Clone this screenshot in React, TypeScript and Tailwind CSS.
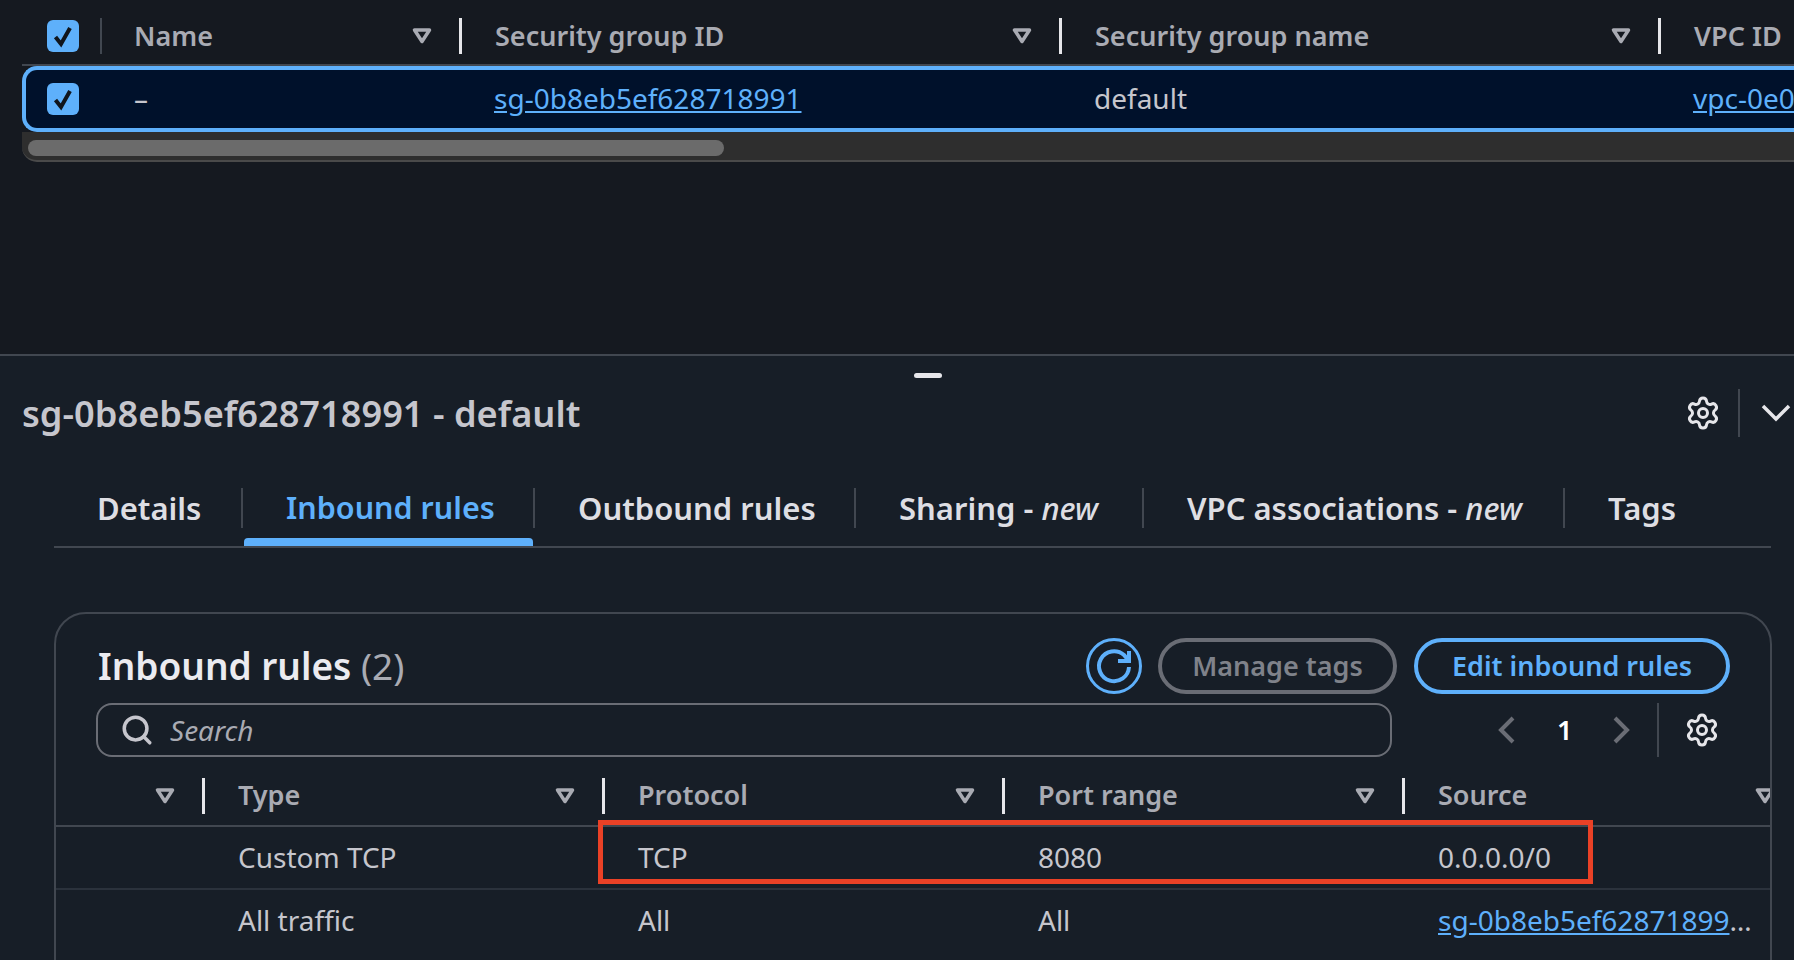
import { Search, Settings } from "lucide-react";

function FilterIcon() {
  return (
    <svg width="20" height="16" viewBox="0 0 20 16" className="shrink-0">
      <path d="M2.5 2 H17.5 L10 13.5 Z" fill="none" stroke="#a9abb3" strokeWidth="3.5" strokeLinejoin="round" />
    </svg>
  );
}

function RefreshIcon() {
  return (
    <svg width="56" height="56" viewBox="0 0 56 56" className="shrink-0">
      <circle cx="28" cy="28" r="26.5" fill="none" stroke="#5eb0fb" strokeWidth="3" />
      <path d="M43 29 A15 15 0 1 1 38 17 L43 23" fill="none" stroke="#5eb0fb" strokeWidth="4" />
      <path d="M43 13 V23 H32" fill="none" stroke="#5eb0fb" strokeWidth="4" />
    </svg>
  );
}

function PageChevron({ flip }: { flip?: boolean }) {
  return (
    <svg width="18" height="28" viewBox="0 0 18 28" className="shrink-0">
      <path d={flip ? "M3 2 L15 14 L3 26" : "M15 2 L3 14 L15 26"} fill="none" stroke="#6a6d75" strokeWidth="4" />
    </svg>
  );
}

function Checkbox() {
  return (
    <div className="w-8 h-8 shrink-0 rounded-[6px] bg-[#5eb0fb] flex items-center justify-center">
      <svg width="22" height="24" viewBox="0 0 22 24">
        <path d="M3.5 13 L9 20 L18 4" fill="none" stroke="#10151c" strokeWidth="4" />
      </svg>
    </div>
  );
}

function HeaderCell({ label, widthClass }: { label: string; widthClass: string }) {
  return (
    <div className={`${widthClass} shrink-0 flex items-center h-9`}>
      <span className="flex-1 text-[27px] font-semibold text-[#a9abb3]">{label}</span>
      <FilterIcon />
      <div className="ml-[27px] mr-[33px] w-[3px] h-9 bg-[#e6e6ea]" />
    </div>
  );
}

function Tab({
  children,
  widthClass,
  active,
  last,
}: {
  children: React.ReactNode;
  widthClass: string;
  active?: boolean;
  last?: boolean;
}) {
  return (
    <div className={`relative flex items-center h-10 shrink-0 ${widthClass} ${last ? "" : "border-r-2 border-[#414750]"} pl-[43px]`}>
      <span className={`font-semibold whitespace-nowrap ${active ? "text-[30.5px] text-[#5eb0fb]" : "text-[31px] text-[#dedee3]"}`}>{children}</span>
      {active && <div className="absolute left-[1px] right-0 -bottom-[18px] h-2 rounded-t-[4px] bg-[#5eb0fb]" />}
    </div>
  );
}

function BodyCell({ children, widthClass }: { children: React.ReactNode; widthClass: string }) {
  return <div className={`${widthClass} shrink-0 pb-[2px] text-[28px] text-[#c6c6cd]`}>{children}</div>;
}

export default function App() {
  return (
    <div className="w-[1794px] h-[960px] overflow-hidden bg-[#151920] font-['Noto_Sans',sans-serif]">
      {/* Security groups table */}
      <div className="h-[354px] pt-[18px] pl-[22px] overflow-hidden">
        <div className="w-[1772px] flex items-center h-9 pb-[10px] pl-[25px] border-b-2 border-[#414750] box-content">
          <Checkbox />
          <div className="ml-[21px] mr-[33px] w-[2px] h-9 bg-[#414750]" />
          <div className="-ml-[1px] flex items-center">
            <HeaderCell label="Name" widthClass="w-[361px]" />
            <HeaderCell label="Security group ID" widthClass="w-[600px]" />
            <HeaderCell label="Security group name" widthClass="w-[599px]" />
          </div>
          <span className="text-[27px] font-semibold text-[#a9abb3] whitespace-nowrap">VPC ID</span>
        </div>
        <div className="w-[1790px] h-[66px] flex items-center pl-[21px] border-4 border-r-0 border-[#5eb0fb] rounded-l-[15px] bg-[#00112b]">
          <Checkbox />
          <div className="w-[55px] shrink-0" />
          <BodyCell widthClass="w-[360px]">–</BodyCell>
          <BodyCell widthClass="w-[600px]">
            <span className="text-[#5eb0fb] underline">sg-0b8eb5ef628718991</span>
          </BodyCell>
          <BodyCell widthClass="w-[599px]">default</BodyCell>
          <span className="pb-[2px] text-[28px] text-[#5eb0fb] underline whitespace-nowrap">vpc-0e0</span>
        </div>
        <div className="w-[1772px] h-[30px] bg-[#2e2e2e] border-b-2 border-[#4a4a4a] rounded-bl-[15px] pl-[6px] pt-2 box-border">
          <div className="w-[696px] h-4 rounded-[8px] bg-[#6b6b6b]" />
        </div>
      </div>

      {/* Split panel */}
      <div className="h-[606px] bg-[#171e27] border-t-2 border-[#414750] relative">
        <div className="flex justify-center pt-[17px] pl-[62px]">
          <div className="w-7 h-[5px] rounded-full bg-[#e6e6ea]" />
        </div>
        <div className="flex items-center h-[48px] mt-[11px] pl-[22px]">
          <h2 className="flex-1 text-[36.2px] font-semibold text-[#c6c6cd] whitespace-nowrap">sg-0b8eb5ef628718991 - default</h2>
          <Settings className="w-9 h-9 text-[#e6e6ea] shrink-0" strokeWidth={2} />
          <div className="ml-[17px] w-[2px] h-12 bg-[#414750]" />
          <svg width="30" height="18" viewBox="0 0 30 18" className="ml-[21px] mr-[3px] shrink-0">
            <path d="M2 2 L15 15 L28 2" fill="none" stroke="#e6e6ea" strokeWidth="3.5" />
          </svg>
        </div>

        <div className="ml-[54px] mt-[51px] w-[1717px] h-[58px] box-content border-b-2 border-[#414750] flex items-start">
          <Tab widthClass="w-[189px]">Details</Tab>
          <Tab widthClass="w-[292px]" active>
            Inbound rules
          </Tab>
          <Tab widthClass="w-[321px]">Outbound rules</Tab>
          <Tab widthClass="w-[288px]">
            Sharing - <em className="font-medium">new</em>
          </Tab>
          <Tab widthClass="w-[421px]">
            VPC associations - <em className="font-medium">new</em>
          </Tab>
          <Tab widthClass="w-[200px]" last>
            Tags
          </Tab>
        </div>

        <div className="ml-[54px] mt-[64px] w-[1718px] h-[500px] border-2 border-[#414750] rounded-t-[32px] overflow-hidden">
          <div className="flex items-center justify-between pl-[42px] pr-[40px] pt-6 h-[80px]">
            <h3 className="text-[37px] font-semibold text-[#ebebf0] whitespace-nowrap">
              Inbound rules <span className="font-normal text-[#a9abb3]">(2)</span>
            </h3>
            <div className="flex items-center">
              <RefreshIcon />
              <button className="ml-4 w-[239px] h-[56px] rounded-full border-4 border-[#6a6d75] text-[27px] font-semibold text-[#7f828a]">
                Manage tags
              </button>
              <button className="ml-[17px] w-[316px] h-[56px] rounded-full border-4 border-[#5eb0fb] text-[27px] font-semibold text-[#5eb0fb]">
                Edit inbound rules
              </button>
            </div>
          </div>

          <div className="flex items-center pl-[40px] mt-[9px]">
            <div className="w-[1296px] h-[54px] rounded-[16px] border-2 border-[#6a6d75] flex items-center pl-[22px]">
              <Search className="w-[34px] h-[34px] text-[#c6c6cd]" strokeWidth={2.5} />
              <span className="ml-[16px] text-[28px] italic text-[#a9abb3]">Search</span>
            </div>
            <div className="ml-[106px]">
              <PageChevron />
            </div>
            <span className="ml-[41px] w-[36px] text-[27px] font-semibold text-white">1</span>
            <div className="ml-[19px]">
              <PageChevron flip />
            </div>
            <div className="ml-[27px] w-[2px] h-[54px] bg-[#414750]" />
            <Settings className="ml-[25px] w-9 h-9 text-[#e6e6ea] shrink-0" strokeWidth={2} />
          </div>

          <div className="flex items-center h-[35px] mt-[21px] box-content pb-[12px] border-b-2 border-[#414750] w-[1800px]">
            <div className="w-[182px] shrink-0 flex items-center justify-end">
              <FilterIcon />
              <div className="ml-[27px] mr-[33px] w-[3px] h-9 bg-[#e6e6ea]" />
            </div>
            <HeaderCell label="Type" widthClass="w-[400px]" />
            <HeaderCell label="Protocol" widthClass="w-[400px]" />
            <HeaderCell label="Port range" widthClass="w-[400px]" />
            <HeaderCell label="Source" widthClass="w-[400px]" />
          </div>

          <div className="flex items-center h-[63px] pl-[182px] border-b-2 border-[#2b323c]">
            <BodyCell widthClass="w-[400px]">Custom TCP</BodyCell>
            <BodyCell widthClass="w-[400px]">TCP</BodyCell>
            <BodyCell widthClass="w-[400px]">8080</BodyCell>
            <BodyCell widthClass="w-[330px]">0.0.0.0/0</BodyCell>
          </div>
          <div className="flex items-center h-[61px] pl-[182px]">
            <BodyCell widthClass="w-[400px]">All traffic</BodyCell>
            <BodyCell widthClass="w-[400px]">All</BodyCell>
            <BodyCell widthClass="w-[400px]">All</BodyCell>
            <BodyCell widthClass="w-[318px]">
              <div className="truncate">
                <span className="text-[#5eb0fb] underline">sg-0b8eb5ef628718991 / default</span>
              </div>
            </BodyCell>
          </div>
        </div>

        {/* annotation drawn over the screenshot */}
        <div className="absolute left-[598px] top-[464px] w-[995px] h-[64px] border-[5px] border-[#ea4126]" />
      </div>
    </div>
  );
}
